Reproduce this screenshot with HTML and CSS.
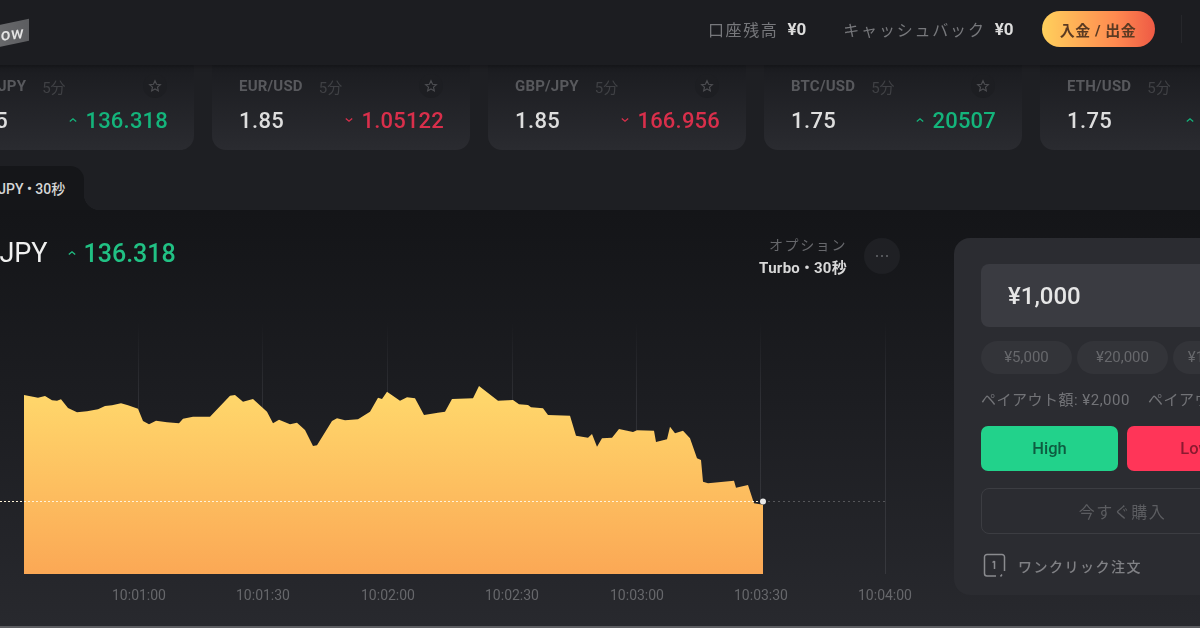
FILE: index.html
```html
<!DOCTYPE html>
<html lang="ja">
    <head>
        <meta charset="utf-8">
        <title>HighLow</title>
        <link rel="stylesheet" href="styles.css">
    </head>
    <body>
        <div class="page">

            <div class="header">
                <div class="logo"><span>low</span></div>
                <div class="account">
                    <span class="acc-label">口座残高</span>
                    <span class="acc-value">¥0</span>
                    <span class="acc-label cash">キャッシュバック</span>
                    <span class="acc-value">¥0</span>
                    <button class="deposit">入金 / 出金</button>
                    <div class="divider"></div>
                </div>
            </div>

            <div class="tickers">
                <div class="card">
                    <div class="card-top">
                        <span class="pair">USD/JPY</span><span class="period">5分</span>
                        <span class="star"><svg width="14" height="14" viewBox="0 0 24 24"><path d="M12 3l2.7 6 6.5.7-4.9 4.3 1.4 6.4L12 17.1l-5.700 3.300 1.400-6.400-4.900-4.300 6.500-.7z"/></svg></span>
                    </div>
                    <div class="card-rate">
                        <span class="payout">1.85</span>
                        <span class="price up"><svg width="8" height="6" viewBox="0 0 10 6"><path d="M1 5l4-3.500L9 5"/></svg>136.318</span>
                    </div>
                </div>
                <div class="card">
                    <div class="card-top">
                        <span class="pair">EUR/USD</span><span class="period">5分</span>
                        <span class="star"><svg width="14" height="14" viewBox="0 0 24 24"><path d="M12 3l2.7 6 6.5.7-4.9 4.3 1.4 6.4L12 17.1l-5.700 3.300 1.400-6.400-4.900-4.300 6.500-.7z"/></svg></span>
                    </div>
                    <div class="card-rate">
                        <span class="payout">1.85</span>
                        <span class="price down"><svg width="8" height="6" viewBox="0 0 10 6"><path d="M1 1l4 3.500L9 1"/></svg>1.05122</span>
                    </div>
                </div>
                <div class="card">
                    <div class="card-top">
                        <span class="pair">GBP/JPY</span><span class="period">5分</span>
                        <span class="star"><svg width="14" height="14" viewBox="0 0 24 24"><path d="M12 3l2.7 6 6.5.7-4.9 4.3 1.4 6.4L12 17.1l-5.700 3.300 1.400-6.400-4.900-4.300 6.500-.7z"/></svg></span>
                    </div>
                    <div class="card-rate">
                        <span class="payout">1.85</span>
                        <span class="price down"><svg width="8" height="6" viewBox="0 0 10 6"><path d="M1 1l4 3.500L9 1"/></svg>166.956</span>
                    </div>
                </div>
                <div class="card">
                    <div class="card-top">
                        <span class="pair">BTC/USD</span><span class="period">5分</span>
                        <span class="star"><svg width="14" height="14" viewBox="0 0 24 24"><path d="M12 3l2.7 6 6.5.7-4.9 4.3 1.4 6.4L12 17.1l-5.700 3.300 1.400-6.400-4.900-4.300 6.500-.7z"/></svg></span>
                    </div>
                    <div class="card-rate">
                        <span class="payout">1.75</span>
                        <span class="price up"><svg width="8" height="6" viewBox="0 0 10 6"><path d="M1 5l4-3.500L9 5"/></svg>20507</span>
                    </div>
                </div>
                <div class="card">
                    <div class="card-top">
                        <span class="pair">ETH/USD</span><span class="period">5分</span>
                        <span class="star"><svg width="14" height="14" viewBox="0 0 24 24"><path d="M12 3l2.7 6 6.5.7-4.9 4.3 1.4 6.4L12 17.1l-5.700 3.300 1.400-6.400-4.900-4.300 6.500-.7z"/></svg></span>
                    </div>
                    <div class="card-rate">
                        <span class="payout">1.75</span>
                        <span class="price up"><svg width="8" height="6" viewBox="0 0 10 6"><path d="M1 5l4-3.500L9 5"/></svg>1227.6</span>
                    </div>
                </div>
            </div>

            <div class="tabs">
                <div class="tab">USD/JPY • 30秒</div>
            </div>

            <div class="work">
                <div class="chart-col">
                    <div class="chart-head">
                        <div class="title">
                            <span class="title-pair">USD/JPY</span>
                            <span class="title-price"><svg width="8" height="6" viewBox="0 0 10 6"><path d="M1 5l4-3.500L9 5"/></svg>136.318</span>
                        </div>
                        <div class="option">
                            <div class="option-name">
                                <span class="option-label">オプション</span>
                                <span class="option-type">Turbo • 30秒</span>
                            </div>
                            <div class="more"><i></i><i></i><i></i></div>
                        </div>
                    </div>
                    <!-- viewBox uses the same x/y as the screenshot -->
                    <svg class="chart" width="1018" height="332" viewBox="-64 294 1018 332">
                        <defs>
                            <linearGradient id="area" x1="0" y1="0" x2="0" y2="1">
                                <stop offset="0" stop-color="#ffd96c"/>
                                <stop offset="1" stop-color="#fba855"/>
                            </linearGradient>
                            <linearGradient id="gridfade" gradientUnits="userSpaceOnUse" x1="0" y1="322" x2="0" y2="574">
                                <stop offset="0" stop-color="#2e2f34" stop-opacity="0"/>
                                <stop offset=".3" stop-color="#2e2f34"/>
                                <stop offset="1" stop-color="#37383d"/>
                            </linearGradient>
                        </defs>
                        <g class="grid" stroke="url(#gridfade)">
                            <path d="M138.500 322V574M262.500 322V574M387.500 322V574M512.500 322V574M636.500 322V574M760.500 322V574M885.500 322V574"/>
                        </g>
                        <path fill="url(#area)" d="M24 395L33 396.7 38 397.7 45 396 52 400.3 57 400.7 61 399.3 68 408 77 412.3 87 411.3 98 409.3 105 406 112 405.3 121 403.3 128 405.3 138 408.7 143 421 149 424.3 156 420.7 167 422.3 179 423.3 183 418.7 193 416.7 210 416.7 230 395.7 235 395 243 401.7 253 399 267 411.7 273 423.3 279 419.7 290 424.3 297 422.7 305 430 313 446 317 445.3 332 421 337 418.3 345 420.3 358 419.3 370 411.7 378 397.7 382 399 387 391.7 400 400.7 407 397.3 415 398.3 424 415 445 411.7 452 399 473 398.3 479 386 498 400.7 513 400 519 404.3 528 405 531 407.3 543 408.3 548 415 570 415.7 576 435.7 588 437.7 592 434 597 446.7 602 438.3 612 437.7 619 429 633 432 637 430.3 654 430.7 656 442 667 439.3 670 426.7 675 433.3 683 430.7 690 438.3 697 458.3 701 460 703 481.7 708 483.3 734 480.7 736 487.7 748 485 754 503.3 763 504.7V574H24Z"/>
                        <path class="level-in" d="M-64 501.500H763"/>
                        <path class="level-out" d="M763 501.500H885"/>
                        <circle cx="763" cy="501.500" r="3" fill="#e8e8e8"/>
                        <g class="times">
                            <text x="139" y="600">10:01:00</text>
                            <text x="263" y="600">10:01:30</text>
                            <text x="388" y="600">10:02:00</text>
                            <text x="512" y="600">10:02:30</text>
                            <text x="637" y="600">10:03:00</text>
                            <text x="761" y="600">10:03:30</text>
                            <text x="885" y="600">10:04:00</text>
                        </g>
                    </svg>
                </div>

                <div class="order">
                    <div class="amount">¥1,000</div>
                    <div class="chips">
                        <span class="chip">¥5,000</span>
                        <span class="chip">¥20,000</span>
                        <span class="chip">¥100,000</span>
                    </div>
                    <div class="payouts">
                        <span>ペイアウト額: ¥2,000</span>
                        <span>ペイアウト額: ¥2,000</span>
                    </div>
                    <div class="trade">
                        <button class="btn high">High</button>
                        <button class="btn low">Low</button>
                    </div>
                    <button class="buy">今すぐ購入</button>
                    <div class="oneclick">
                        <svg width="23" height="25" viewBox="0 0 23 25"><path d="M13 23H4a2.500 2.500 0 0 1-2.500-2.500V4A2.500 2.500 0 0 1 4 1.500h15A2.500 2.500 0 0 1 21.500 4v14"/><path d="M11.500 8v8M9.500 9.500l2-1.500M19 21.500l-1.500 2"/></svg>
                        <span>ワンクリック注文</span>
                    </div>
                </div>
            </div>

        </div>
    </body>
</html>
```

FILE: styles.css
```css
* {
    box-sizing: border-box;
}
body {
    margin: 0;
    height: 628px;
    overflow: hidden;
    background-color: #1e1f23;
    font-family: Roboto, "Noto Sans CJK JP", sans-serif;
}
/* the shot is cropped on both sides, so the page is wider than the window */
.page {
    width: 1500px;
    height: 628px;
    margin-left: -64px;
    filter: blur(.7px);
}
button {
    border: none;
    font-family: inherit;
}

/*Header*/
.header {
    position: relative;
    z-index: 1;
    display: flex;
    align-items: center;
    height: 65px;
    padding-left: 24px;
    padding-bottom: 7px;
    background-color: #1c1d21;
    box-shadow: 0 1px 5px rgba(0, 0, 0, .35);
}
.logo {
    align-self: flex-start;
    width: 69px;
    height: 22px;
    margin-top: 26px;
    padding-right: 5px;
    text-align: right;
    background: linear-gradient(90deg, #77787a, #5c5d60);
    transform: skewY(-12deg);
}
.logo span {
    display: inline-block;
    color: #e4e4e4;
    font-size: 17px;
    font-weight: 500;
    line-height: 22px;
    letter-spacing: .5px;
    transform: skewY(6deg);
}
.account {
    display: flex;
    align-items: center;
    margin-left: 679px;
}
.acc-label {
    color: #77787c;
    font-size: 16px;
    letter-spacing: 1.6px;
}
.acc-value {
    margin-left: 9px;
    color: #dcdcdc;
    font-size: 17px;
    font-weight: 700;
}
.cash {
    margin-left: 37px;
    letter-spacing: 1.8px;
}
.deposit {
    width: 113px;
    height: 36px;
    margin-left: 28px;
    border-radius: 18px;
    background: linear-gradient(90deg, #ffd05c, #ff8a50 65%, #ee5a45);
    color: #5b3a22;
    font-size: 15px;
    font-weight: 700;
    letter-spacing: .5px;
}
.divider {
    width: 1px;
    height: 28px;
    margin-left: 26px;
    background-color: #26272b;
}

/*Ticker cards*/
.tickers {
    display: flex;
    gap: 18px;
    margin-bottom: 16px;
}
.card {
    flex: none;
    width: 258px;
    height: 85px;
    padding: 9px 26px 0 27px;
    border-radius: 0 0 14px 14px;
    background: linear-gradient(180deg, #1b1c20, #2a2b30);
}
.card-top {
    display: flex;
    align-items: center;
    height: 24px;
    margin-bottom: 7px;
    padding-right: 1px;
}
.pair {
    color: #58595d;
    font-size: 15px;
    font-weight: 700;
    letter-spacing: .2px;
}
.period {
    margin-left: 16px;
    color: #3f4044;
    font-size: 15px;
}
.star {
    display: flex;
    align-items: center;
    justify-content: center;
    width: 24px;
    height: 24px;
    margin-left: auto;
    border-radius: 50%;
    background-color: #1d1e22;
}
.star path {
    fill: none;
    stroke: #4c4d51;
    stroke-width: 2;
}
.card-rate {
    display: flex;
    align-items: center;
    justify-content: space-between;
    height: 30px;
    font-size: 22px;
    font-weight: 500;
}
.payout {
    color: #dedede;
    letter-spacing: .4px;
}
.price {
    display: flex;
    align-items: center;
    gap: 8px;
    letter-spacing: .2px;
}
.price svg, .title-price svg {
    fill: none;
    stroke: currentColor;
    stroke-width: 1.6;
}
.up {
    color: #14b47b;
}
.down {
    color: #d92f4b;
}

/*Tab*/
.tabs {
    height: 44px;
}
.tab {
    position: relative;
    width: 148px;
    height: 44px;
    padding-left: 30px;
    border-radius: 0 14px 0 0;
    background-color: #151619;
    color: #d6d6d6;
    font-size: 14px;
    font-weight: 500;
    line-height: 47px;
}
/* concave corner where the tab meets the panel */
.tab::after {
    content: "";
    position: absolute;
    right: -16px;
    bottom: 0;
    width: 16px;
    height: 16px;
    background: radial-gradient(circle at 100% 0, transparent 16px, #151619 16.5px);
}

/*Main*/
.work {
    display: flex;
    height: 418px;
    padding-top: 28px;
    border-bottom: 2px solid #5c5d61;
    background: linear-gradient(180deg, #141518, #1c1d21 45%, #28292e);
}
.chart-col {
    flex: none;
    width: 1018px;
}
.chart-head {
    display: flex;
    justify-content: space-between;
    height: 56px;
}
.title {
    display: flex;
    align-items: center;
    gap: 20px;
    height: 30px;
    padding-left: 1px;
}
.title-pair {
    color: #f0f0f0;
    font-size: 27px;
    font-weight: 400;
}
.title-price {
    display: flex;
    align-items: center;
    gap: 8px;
    color: #21c184;
    font-size: 25px;
    font-weight: 500;
}
.option {
    display: flex;
    width: 207px;
    margin-right: 54px;
    justify-content: space-between;
}
.option-name {
    display: flex;
    flex-direction: column;
    align-items: flex-end;
    flex: 1;
    margin-top: -3px;
    margin-right: 17px;
}
.option-label {
    color: #67686c;
    font-size: 14px;
    line-height: 20px;
    letter-spacing: 1.600px;
}
.option-type {
    margin-top: 3px;
    color: #d8d8d8;
    font-size: 15px;
    font-weight: 700;
    line-height: 20px;
    letter-spacing: .3px;
}
.more {
    display: flex;
    align-items: center;
    justify-content: center;
    gap: 3px;
    width: 36px;
    height: 36px;
    border-radius: 50%;
    background-color: #1f2024;
}
.more i {
    width: 2px;
    height: 2px;
    border-radius: 50%;
    background-color: #67686c;
}
.chart {
    display: block;
}
.grid path {
    fill: none;
}
.level-in {
    stroke: #fff3d8;
    stroke-dasharray: 2 2;
}
.level-out {
    stroke: #55565a;
    stroke-dasharray: 2 3;
}
.times text {
    fill: #66676b;
    font-size: 14px;
    text-anchor: middle;
}

/*Order panel*/
.order {
    flex: none;
    width: 337px;
    height: 357px;
    padding: 26px 27px;
    border-radius: 16px;
    background-color: #2b2c31;
}
.amount {
    height: 63px;
    padding-left: 27px;
    border-radius: 8px;
    background-color: #3a3b41;
    color: #e6e6e6;
    font-size: 24px;
    font-weight: 500;
    line-height: 65px;
}
.chips {
    display: flex;
    gap: 5px;
    margin-top: 14px;
}
.chip {
    flex: none;
    width: 91px;
    height: 33px;
    border-radius: 17px;
    background-color: #333439;
    color: #67686c;
    font-size: 15px;
    line-height: 33px;
    text-align: center;
}
.payouts {
    display: flex;
    gap: 18px;
    height: 20px;
    margin-top: 16px;
    color: #727377;
    font-size: 15px;
    letter-spacing: .5px;
    line-height: 20px;
    white-space: nowrap;
}
.trade {
    display: flex;
    gap: 9px;
    margin-top: 16px;
}
.btn {
    flex: 1;
    height: 45px;
    border-radius: 7px;
    font-size: 16.5px;
    font-weight: 500;
}
.high {
    background-color: #22d28b;
    color: #0e5b40;
}
.low {
    background-color: #ff3558;
    color: #8b1a30;
}
.buy {
    display: block;
    width: 100%;
    height: 46px;
    margin-top: 17px;
    border: 1px solid #3c3d42;
    border-radius: 8px;
    background: none;
    color: #5c5d61;
    font-size: 16px;
    letter-spacing: 1.5px;
}
.oneclick {
    display: flex;
    align-items: center;
    gap: 12px;
    margin-top: 19px;
    margin-left: 2px;
    color: #808185;
    font-size: 14px;
    font-weight: 500;
    letter-spacing: 1.5px;
}
.oneclick svg {
    fill: none;
    stroke: #8a8b8f;
    stroke-width: 1.5;
}
```
